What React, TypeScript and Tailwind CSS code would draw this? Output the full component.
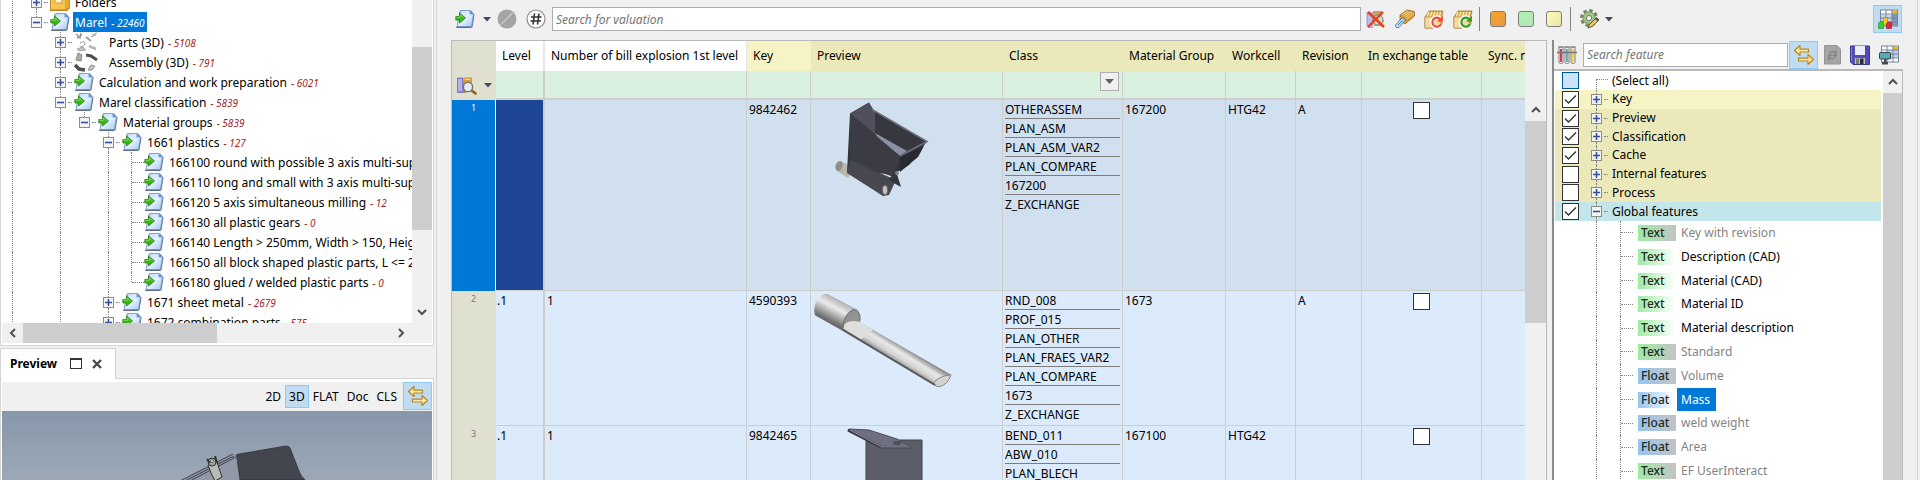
import React, { useState } from 'react';

// --- DATA LAYER ---
type TreeNode = {
  name: string;
  count?: string;
  // one entry per indentation level left of the node, true draws the guide line
  guides: boolean[];
  kind: 'folder' | 'doc' | 'parts' | 'assembly';
  open?: boolean;
  leaf?: boolean;
  last?: boolean;
  selected?: boolean;
};

const LEAF_GUIDES = [true, false, true, false, true];

const TREE: TreeNode[] = [
  { name: 'Folders', guides: [true], kind: 'folder' },
  { name: 'Marel', count: '22460', guides: [true], kind: 'doc', open: true, last: true, selected: true },
  { name: 'Parts (3D)', count: '5108', guides: [true, false], kind: 'parts' },
  { name: 'Assembly (3D)', count: '791', guides: [true, false], kind: 'assembly' },
  { name: 'Calculation and work preparation', count: '6021', guides: [true, false], kind: 'doc' },
  { name: 'Marel classification', count: '5839', guides: [true, false], kind: 'doc', open: true },
  { name: 'Material groups', count: '5839', guides: [true, false, true], kind: 'doc', open: true, last: true },
  { name: '1661 plastics', count: '127', guides: [true, false, true, false], kind: 'doc', open: true },
  { name: '166100 round with possible 3 axis multi-support', guides: LEAF_GUIDES, kind: 'doc', leaf: true },
  { name: '166110 long and small with 3 axis multi-support', guides: LEAF_GUIDES, kind: 'doc', leaf: true },
  { name: '166120 5 axis simultaneous milling', count: '12', guides: LEAF_GUIDES, kind: 'doc', leaf: true },
  { name: '166130 all plastic gears', count: '0', guides: LEAF_GUIDES, kind: 'doc', leaf: true },
  { name: '166140 Length > 250mm, Width > 150, Height', guides: LEAF_GUIDES, kind: 'doc', leaf: true },
  { name: '166150 all block shaped plastic parts, L <= 250', guides: LEAF_GUIDES, kind: 'doc', leaf: true },
  { name: '166180 glued / welded plastic parts', count: '0', guides: LEAF_GUIDES, kind: 'doc', leaf: true, last: true },
  { name: '1671 sheet metal', count: '2679', guides: [true, false, true, false], kind: 'doc' },
  { name: '1672 combination parts', count: '575', guides: [true, false, true, false], kind: 'doc' },
];

const COLUMNS = [
  { name: 'Level', width: 'w-[49px]', head: 'bg-white border-r-2 border-[#e6e6e6]', edge: 'border-r-2' },
  { name: 'Number of bill explosion 1st level', width: 'w-[202px]', head: 'bg-white border-r border-[#e6e6e6]', edge: 'border-r' },
  { name: 'Key', width: 'w-[64px]', head: 'bg-[#f6f4c5]', edge: 'border-r' },
  { name: 'Preview', width: 'w-[192px]', head: 'bg-[#ebe9ba]', edge: 'border-r' },
  { name: 'Class', width: 'w-[120px]', head: 'bg-[#ebe9ba]', edge: 'border-r' },
  { name: 'Material Group', width: 'w-[103px]', head: 'bg-[#ebe9ba]', edge: 'border-r' },
  { name: 'Workcell', width: 'w-[70px]', head: 'bg-[#ebe9ba]', edge: 'border-r' },
  { name: 'Revision', width: 'w-[66px]', head: 'bg-[#ebe9ba]', edge: 'border-r' },
  { name: 'In exchange table', width: 'w-[120px]', head: 'bg-[#ebe9ba]', edge: 'border-r' },
  { name: 'Sync. needed', width: '', head: 'bg-[#ebe9ba]', edge: '' },
];

const ROWS = [
  {
    level: '', explosion: '', key: '9842462', preview: 'hopper', group: '167200', workcell: 'HTG42', revision: 'A',
    classes: ['OTHERASSEM', 'PLAN_ASM', 'PLAN_ASM_VAR2', 'PLAN_COMPARE', '167200', 'Z_EXCHANGE'],
  },
  {
    level: '.1', explosion: '1', key: '4590393', preview: 'tube', group: '1673', workcell: '', revision: 'A',
    classes: ['RND_008', 'PROF_015', 'PLAN_OTHER', 'PLAN_FRAES_VAR2', 'PLAN_COMPARE', '1673', 'Z_EXCHANGE'],
  },
  {
    level: '.1', explosion: '1', key: '9842465', preview: 'sheet', group: '167100', workcell: 'HTG42', revision: '',
    classes: ['BEND_011', 'ABW_010', 'PLAN_BLECH', 'PLAN_COMPARE', '167100', 'Z_EXCHANGE'],
  },
];

const FEATURE_GROUPS = [
  { name: 'Key', checked: true, bg: 'bg-[#f6f4c5]' },
  { name: 'Preview', checked: true, bg: 'bg-[#ebe9ba]' },
  { name: 'Classification', checked: true, bg: 'bg-[#ebe9ba]' },
  { name: 'Cache', checked: true, bg: 'bg-[#ebe9ba]' },
  { name: 'Internal features', checked: false, bg: 'bg-[#ebe9ba]' },
  { name: 'Process', checked: false, bg: 'bg-[#ebe9ba]' },
  { name: 'Global features', checked: true, bg: 'bg-[#c2e6ea]', open: true },
];

const FEATURES = [
  { name: 'Key with revision', type: 'Text', enabled: false },
  { name: 'Description (CAD)', type: 'Text', enabled: true },
  { name: 'Material (CAD)', type: 'Text', enabled: true },
  { name: 'Material ID', type: 'Text', enabled: true },
  { name: 'Material description', type: 'Text', enabled: true },
  { name: 'Standard', type: 'Text', enabled: false },
  { name: 'Volume', type: 'Float', enabled: false },
  { name: 'Mass', type: 'Float', enabled: true },
  { name: 'weld weight', type: 'Float', enabled: false },
  { name: 'Area', type: 'Float', enabled: false },
  { name: 'EF UserInteract', type: 'Text', enabled: false },
];

const VIEW_MODES = ['2D', '3D', 'FLAT', 'Doc', 'CLS'];

// --- ICONS ---
const DocIcon = () => (
  <svg width="20" height="20" viewBox="0 0 20 20" className="shrink-0">
    <defs>
      <linearGradient id="docFill" x1="0" y1="0" x2="1" y2="1">
        <stop offset="0" stopColor="#b9d6fb" />
        <stop offset="0.5" stopColor="#e3f0ff" />
        <stop offset="1" stopColor="#a3c8f5" />
      </linearGradient>
    </defs>
    <path d="M4.5 3 L6 1.5 H16 L19.5 5.5 L17.5 18 L16 19 H1 L2 17 Z" fill="#5f6c85" />
    <path d="M5.5 1.5 H14.5 L18.5 5 L16.5 17.5 H2 Z" fill="url(#docFill)" stroke="#6d96d2" strokeWidth="0.8" />
    <path d="M14.5 1.2 L14.6 5.3 L18.6 5.4 Z" fill="#5f95e0" />
    <path d="M0.8 7.5 H4.5 V4 L10.5 9 L4.5 14 V11 H0.8 Z" fill="#3fb619" stroke="#26800d" strokeWidth="0.8" />
    <path d="M1.5 8.3 H5.3 V6 L8.5 8.8" fill="none" stroke="#8fe36a" strokeWidth="0.8" />
  </svg>
);

const FolderIcon = () => (
  <svg width="20" height="20" viewBox="0 0 20 20" className="shrink-0">
    <path d="M3 0 H18 L20 3 V16 L17 19 H0 Z" fill="#b87d1c" />
    <path d="M0.5 4 L3 1 H16 V18 H0.5 Z" fill="#f5c451" stroke="#c28a26" />
    <rect x="5" y="2" width="7" height="9" fill="#fff5d8" stroke="#cf9c3b" />
    <path d="M16 2 L19.5 4 V15 L16 18 Z" fill="#e9a92e" />
  </svg>
);

const PartsIcon = ({ dark }: { dark?: boolean }) => (
  <svg width="24" height="20" viewBox="0 0 24 20" className="shrink-0" fill="none" stroke={dark ? '#4d5054' : '#9c9c9c'}>
    {dark ? (
      <>
        <path d="M4 1 L8 3 L7 9 L2 8 Z" fill="#aab0a5" stroke="#878c83" />
        <path d="M12 3 L17 4 L23 8" strokeWidth="3" />
        <path d="M1 13 L5 17 L11 18" strokeWidth="3.5" />
        <path d="M14 18 L17 13 L21 14 L18 18 Z" fill="#c5c8c2" stroke="#8d8d8d" />
      </>
    ) : (
      <>
        <path d="M2 2 L6 6 L7 1 M3 6 L8 3" strokeWidth="1.5" />
        <path d="M12 5 L17 9" strokeWidth="2" />
        <path d="M18 3 L23 1 M17 5 L22 3" />
        <path d="M6 11 Q12 8 11 12 Q9 15 6 15" />
        <path d="M3 17 L9 15 L12 18 L5 19 Z" fill="#c0c0c0" stroke="#aaa" />
        <path d="M15 14 L22 17" strokeWidth="2.5" stroke="#b4b4b4" />
      </>
    )}
  </svg>
);

const NodeIcon = ({ kind }: { kind: TreeNode['kind'] }) => {
  if (kind === 'folder') return <FolderIcon />;
  if (kind === 'parts') return <PartsIcon />;
  if (kind === 'assembly') return <PartsIcon dark />;
  return <DocIcon />;
};

const SwapIcon = () => (
  <svg width="22" height="22" viewBox="0 0 22 22">
    <g fill="#ffe9a3" stroke="#b98523" strokeWidth="1.2" strokeLinejoin="round">
      <path d="M1.5 6.5 L7 1.5 V5.2 H15.5 V8 H7 V11.5 Z" />
      <path d="M20.5 15.5 L15 10.5 V14.2 H5.5 V17 H15 V20.5 Z" />
    </g>
  </svg>
);

const CabinetIcon = ({ arrow }: { arrow: string }) => (
  <svg width="20" height="20" viewBox="0 0 20 20">
    <path d="M1 8 L5 2 H19 L18 6 V17 L16 19 H1 Z" fill="#dfa94a" stroke="#a87423" strokeWidth="0.8" />
    <path d="M5 3 L3 8 M8 3 L6 8 M11 3 L9 8 M14 3 L12 8 M17 3 L15 8" stroke="#fff1bf" strokeWidth="1.2" />
    <rect x="1" y="8" width="15" height="11" fill="#f4dca0" stroke="#b0823a" strokeWidth="0.6" />
    <path d="M17 10.5 A5 5 0 1 0 17.5 15" fill="none" stroke="#fff" strokeWidth="4" />
    <path d="M16.5 10.5 A4.5 4.5 0 1 0 17 15" fill="none" stroke={arrow} strokeWidth="2.2" />
    <path d="M18.8 6.8 V12.6 H13 Z" fill={arrow} />
  </svg>
);

const DeleteIcon = () => (
  <svg width="20" height="20" viewBox="0 0 20 20">
    <path d="M0.5 3 H7 V19 H2 L0.5 16 Z" fill="#a3a1da" />
    <path d="M3 3 V17 M5 3 V18" stroke="#dddcf8" />
    <path d="M7 2 H16 V7 L18 12 L15 17 H8 Z" fill="#c9a265" />
    <circle cx="12" cy="11" r="5" fill="#d8dbd6" stroke="#85857b" />
    <path d="M2 3 L18 18 M17 3 L2 18" stroke="#ee3c14" strokeWidth="2.4" />
  </svg>
);

const LabelIcon = () => (
  <svg width="20" height="20" viewBox="0 0 20 20">
    <path d="M5 6 L12 1 L19.5 2.5 V7 L10 15 L5 12 Z" fill="#d69a34" stroke="#8a6120" strokeWidth="0.7" />
    <path d="M7 6 L13 2 M9 7 L15 2.5 M11 8 L17 3 M12 10 L19 4" stroke="#f8dc91" />
    <path d="M0.5 16 L7 9 L10.5 10.5 L4 18.5 L1 18.5 Z" fill="#bfdcf4" stroke="#477eb0" strokeWidth="0.9" />
    <path d="M3 16 L7.5 11.5" stroke="#477eb0" />
  </svg>
);

const GearIcon = () => (
  <svg width="21" height="20" viewBox="0 0 21 20">
    <circle cx="10" cy="9" r="7.5" fill="none" stroke="#6f8a58" strokeWidth="3" strokeDasharray="3.4 2.49" />
    <circle cx="10" cy="9" r="6.2" fill="#a3c18c" stroke="#6b8655" strokeWidth="0.8" />
    <circle cx="10" cy="9" r="2.6" fill="#f0f0f0" stroke="#6b8655" />
    <path d="M9 19 L10.5 15.5 L17.5 8.5 L20 11 L13 17.5 Z" fill="#f3c868" stroke="#56502f" strokeWidth="0.9" />
    <path d="M16 10 L18.5 12.5 L20 11 L17.5 8.5 Z" fill="#555" />
  </svg>
);

const LookupIcon = () => (
  <svg width="20" height="18" viewBox="0 0 20 18">
    <path d="M0.5 1 H6 V15.5 H0.5 Z" fill="#8c87d6" stroke="#6762b4" strokeWidth="0.7" />
    <path d="M2 2 V14 M4 2 V14" stroke="#dcdafc" />
    <path d="M6 2 L8 0.5 H15 V6 H6 Z" fill="#d79b3c" />
    <path d="M6 6 H9 V16 H6 Z" fill="#b58538" />
    <path d="M8 2.5 H13" stroke="#fbe3ae" />
    <path d="M14 13 L18.5 16.5" stroke="#8a6222" strokeWidth="2.6" strokeLinecap="round" />
    <circle cx="11" cy="10" r="4.6" fill="#e3eef2" stroke="#7b7464" strokeWidth="1.4" />
  </svg>
);

const TableChartIcon = () => (
  <svg width="20" height="20" viewBox="0 0 20 20">
    <rect x="2.5" y="1" width="17" height="16" fill="#fff" stroke="#7583a1" />
    <path d="M3 6 H14 V12 H3 Z" fill="#c9d2e6" />
    <path d="M14 1.5 H19 V4.5 H14 Z" fill="#e8b90f" />
    <path d="M14 5 H19 V17 H14 Z" fill="#8496bb" />
    <path d="M3 5 H19 M3 9 H19 M3 13 H19 M8 1 V17 M14 1 V17" stroke="#7583a1" />
    <path d="M0.5 14 L2 12.5 H5.5 V19.5 H0.5 Z" fill="#36cf33" stroke="#208d20" strokeWidth="0.6" />
    <path d="M5.5 10 L7 8.5 H9.5 V16 H5.5 Z" fill="#f4c920" stroke="#9d7f13" strokeWidth="0.6" />
    <path d="M8.5 14.5 L10 13 H13.5 V19.5 H8.5 Z" fill="#e42544" stroke="#8e1529" strokeWidth="0.6" />
  </svg>
);

const TubesIcon = () => (
  <svg width="20" height="18" viewBox="0 0 20 18">
    {[{ x: 2, c: '#e2344c' }, { x: 8, c: '#7fa9c0' }, { x: 14, c: '#f0dc22' }].map(t => (
      <g key={t.x}>
        <rect x={t.x} y="1" width="4" height="16.5" rx="1.5" fill="#f2f2f2" stroke="#7b7b7b" />
        <rect x={t.x + 1} y="3" width="2" height="13" fill={t.c} />
        <path d={`M${t.x - 1} 1 H${t.x + 5}`} stroke="#777" />
      </g>
    ))}
    <path d="M0 6.5 H20" stroke="#777" strokeWidth="1.5" />
  </svg>
);

const RefreshPageIcon = () => (
  <svg width="17" height="20" viewBox="0 0 17 20">
    <path d="M0.5 0.5 H13 L16.5 4 V19 H0.5 Z" fill="#a6a6a6" stroke="#939393" />
    <path d="M5 9 Q8 5 11 8 L12 6.5 V10.5 H8.5 M12 11 Q9 15.5 6 13 L4.5 14.5 V10.5 H8" fill="none" stroke="#828282" strokeWidth="1.3" />
  </svg>
);

const SaveIcon = () => (
  <svg width="20" height="20" viewBox="0 0 20 20">
    <path d="M0.5 1 H19.5 V19.5 H3 L0.5 17 Z" fill="#514fb5" stroke="#38378a" />
    <path d="M5 1 H15 V10 H5 Z" fill="#eceef8" />
    <path d="M1.5 2 V16" stroke="#8583de" />
    <path d="M5 13 H15 V19 H5 Z" fill="#bfc2d1" />
    <path d="M10 13.5 H13.5 V19 H10 Z" fill="#2c2c2c" />
    <path d="M6 13.5 H9 V19 H6 Z" fill="#777" />
  </svg>
);

const TableCameraIcon = () => (
  <svg width="20" height="20" viewBox="0 0 20 20">
    <rect x="2.5" y="1" width="17" height="16" fill="#fff" stroke="#7583a1" />
    <path d="M14 1.5 H19 V5 H14 Z" fill="#e8b90f" />
    <path d="M8 5 H19 V13 H8 Z" fill="#c3cfe4" />
    <path d="M3 5 H19 M3 9 H19 M3 13 H19 M8 1 V17 M14 1 V17" stroke="#7583a1" />
    <rect x="0.5" y="7.5" width="11" height="6.5" rx="1" fill="#59a9bb" stroke="#35454b" />
    <path d="M3 17 H9 V19.5 H3 Z M5 14 H7.5 V17 H5 Z" fill="#4a4a4a" />
  </svg>
);

const Caret = () => (
  <svg width="8" height="5" viewBox="0 0 8 5">
    <path d="M0 0 H8 L4 4.5 Z" fill="#3c4b5f" />
  </svg>
);

const Chevron = ({ d }: { d: string }) => (
  <svg width="10" height="10" viewBox="0 0 10 10" fill="none" stroke="#505050" strokeWidth="2">
    <path d={d} />
  </svg>
);

// --- PART THUMBNAILS ---
const Hopper = () => (
  <svg width="190" height="110" viewBox="1 0 190 110" className="block">
    <path d="M30 61 L45 68 L38 78 L27 71 Q24 64 30 61 Z" fill="#b9b6ae" />
    <ellipse cx="29" cy="66" rx="3.5" ry="5" transform="rotate(20 29 66)" fill="#8f8d87" />
    <path d="M40 13.5 L59 2.5 L61.5 9.5 L117 41.5 L99 65 L84 74 L37 72 Z" fill="#33343c" />
    <path d="M40 13.5 L59 2.5 L65 12 V34 Z" fill="#50505d" />
    <path d="M65 11 L115 41.5 L97 51 L65 33 Z" fill="#36373f" />
    <path d="M65 33 L97 51 L90 56 L68 39 Z" fill="#8b90a3" />
    <path d="M40 13.5 L90 56 L84 77 L40 62 Z" fill="#3a3b44" />
    <path d="M62 9.5 L117 41.5 L90 56" fill="none" stroke="#6e6f7b" strokeWidth="1.5" />
    <path d="M90 57 L114 46 L108 57 L90 72 Z" fill="#292a31" />
    <path d="M40 60 L86 80 L79 95 L73 96 L37 73 Z" fill="#474750" />
    <path d="M79 79 L86 71 L91 87 L82 82 Z" fill="#33343c" />
    <ellipse cx="75" cy="90" rx="2.5" ry="4.5" fill="#c4c2bb" stroke="#6d6d6d" />
    <circle cx="87" cy="73" r="2" fill="#84868f" />
  </svg>
);

const Tube = () => (
  <svg width="190" height="110" viewBox="0 0 190 110" className="block">
    <defs>
      <linearGradient id="tubeBig" gradientUnits="userSpaceOnUse" x1="31" y1="10" x2="16" y2="36">
        <stop offset="0" stopColor="#a8a8a8" />
        <stop offset="0.35" stopColor="#ececec" />
        <stop offset="0.8" stopColor="#777" />
        <stop offset="1" stopColor="#555" />
      </linearGradient>
      <linearGradient id="tubeSlim" gradientUnits="userSpaceOnUse" x1="94" y1="58" x2="80" y2="79">
        <stop offset="0" stopColor="#6b6b6b" />
        <stop offset="0.35" stopColor="#e8e8e8" />
        <stop offset="0.6" stopColor="#d4d4d4" />
        <stop offset="1" stopColor="#4b4b4b" />
      </linearGradient>
    </defs>
    <g transform="scale(1 0.93)">
      <path d="M48 33 L140 90 Q138 100 128 103 L32 42 Z" fill="url(#tubeSlim)" />
      <path d="M140 90 Q126 92 123 99 Q124 103 128 103 Q137 101 140 90 Z" fill="#d3d3d3" stroke="#858585" />
      <path d="M16 3 L46 20 Q51 26 48 34 L32 43 L4 26 Q1 13 10 5 Q13 3 16 3 Z" fill="url(#tubeBig)" />
      <path d="M32 42 Q31 26 42 20 Q50 20 49 33 Z" fill="#929292" />
      <path d="M32 40 Q34 30 48 33 L62 42 L50 52 Z" fill="#dedede" />
      <path d="M32 40 Q32 26 42 20 Q50 20 49 32" fill="none" stroke="#6b6b6b" />
      <path d="M32 42 L124 101" stroke="#555" strokeWidth="2" />
    </g>
  </svg>
);

const Sheet = () => (
  <svg width="190" height="110" viewBox="0 0 190 110" className="block">
    <path d="M55 14 H111 V110 H55 Z" fill="#5b5e68" stroke="#41434b" />
    <path d="M38 3 L58 4 L86 13 L102 22 H70 L37 5 Z" fill="#6f7180" stroke="#4a4c57" />
    <path d="M37 4 L70 21" stroke="#3c3e47" strokeWidth="3" />
    <path d="M39 4 L71 21" stroke="#8f919e" />
    <ellipse cx="86" cy="17" rx="4" ry="2" fill="#4c4e58" />
  </svg>
);

const THUMBNAILS: Record<string, React.ReactNode> = { hopper: <Hopper />, tube: <Tube />, sheet: <Sheet /> };

// --- SHARED PIECES ---
const Expander = ({ open, label }: { open?: boolean; label: string }) => (
  <button aria-label={label} className="grid size-[11px] shrink-0 place-items-center border border-[#8c8c8c] bg-[#f4f4f4]">
    <svg width="7" height="7" viewBox="0 0 7 7" className="block">
      <path d={open ? 'M0 3.5 H7' : 'M0 3.5 H7 M3.5 0 V7'} stroke="#32509b" strokeWidth="1.6" />
    </svg>
  </button>
);

const CheckBox = ({ id, defaultChecked, label, partial }: { id?: string; defaultChecked?: boolean; label?: string; partial?: boolean }) => (
  <span className="grid shrink-0 place-items-center">
    <input
      type="checkbox"
      id={id}
      aria-label={label}
      defaultChecked={defaultChecked}
      className={`peer col-start-1 row-start-1 size-[17px] appearance-none border ${partial ? 'border-[#00559b] bg-[#cce4f7]' : 'border-[#333] bg-white'}`}
    />
    <svg width="13" height="13" viewBox="0 0 13 13" className="pointer-events-none invisible col-start-1 row-start-1 peer-checked:visible" fill="none" stroke="#333" strokeWidth="1.4">
      <path d="M1 6.5 L4.5 10 L12 2.5" />
    </svg>
  </span>
);

const TreeRow = ({ node }: { node: TreeNode }) => (
  <li className="flex h-5 shrink-0 items-center whitespace-nowrap">
    {node.guides.map((on, i) => (
      <span key={i} className={`h-full shrink-0 ${i === 0 ? 'w-[22px] pl-2.5' : 'w-6 pl-3'}`}>
        <span className={`block h-full ${on ? 'border-l border-dotted border-[#808080]' : ''}`} />
      </span>
    ))}
    {node.leaf ? (
      <span className="flex h-full w-6 shrink-0 items-center pl-[11px]">
        <span className={`self-start border-l border-dotted border-[#808080] ${node.last ? 'h-1/2' : 'h-full'}`} />
        <span className="w-3 border-t border-dotted border-[#808080]" />
      </span>
    ) : (
      <span className="flex h-full w-[26px] shrink-0 items-center pl-[7px]">
        <span className="flex h-full flex-col items-center">
          <span className="w-px flex-1 border-l border-dotted border-[#808080]" />
          <Expander open={node.open} label={`Toggle ${node.name}`} />
          <span className={`w-px flex-1 ${node.last ? '' : 'border-l border-dotted border-[#808080]'}`} />
        </span>
        <span className="mx-0.5 flex-1 border-t border-dotted border-[#808080]" />
      </span>
    )}
    <NodeIcon kind={node.kind} />
    <a
      href="#"
      className={`flex h-5 items-center gap-1 pt-px pr-0.5 pl-0.5 ${node.kind === 'parts' || node.kind === 'assembly' ? 'ml-[9px]' : 'ml-[3px]'} ${node.selected ? 'bg-[#0078d7] text-white' : ''}`}
    >
      {node.name}
      {node.count && (
        <span className={`text-[10px] italic ${node.selected ? 'text-white' : 'text-[#a51f24]'}`}>- {node.count}</span>
      )}
    </a>
  </li>
);

const ClassificationTree = () => (
  <div className="flex h-[346px] shrink-0 flex-col border-x border-b border-[#d4d4d4] bg-white px-px pb-0.5">
    <div className="flex min-h-0 flex-1">
      <ul className="-mt-2 flex min-w-0 flex-1 flex-col overflow-hidden">
        {TREE.map(node => <TreeRow key={node.name} node={node} />)}
      </ul>
      <div className="flex w-5 flex-col items-center bg-[#f0f0f0] pt-[47px]">
        <div className="h-[183px] w-full bg-[#cdcdcd]" />
        <div className="mt-auto pb-1.5">
          <Chevron d="M1 3 L5 7 L9 3" />
        </div>
      </div>
    </div>
    <div className="flex h-5 items-center bg-[#f0f0f0]">
      <div className="grid w-[21px] place-items-center"><Chevron d="M7 1 L3 5 L7 9" /></div>
      <div className="h-full w-[194px] bg-[#cdcdcd]" />
      <div className="mr-[26px] ml-auto"><Chevron d="M3 1 L7 5 L3 9" /></div>
    </div>
  </div>
);

const PreviewPane = () => {
  const [mode, setMode] = useState('3D');
  return (
    <section className="mt-0.5 flex min-h-0 flex-1 flex-col">
      <div className="flex h-[31px]">
        <div className="-mb-px flex w-[116px] items-center border border-b-0 border-[#d4d4d4] bg-white pb-0.5 pl-[9px]">
          <h2 className="w-[60px] font-bold">Preview</h2>
          <button aria-label="Maximize" className="h-[11px] w-3 border border-t-2 border-[#333] bg-white" />
          <button aria-label="Close" className="ml-2.5">
            <svg width="10" height="10" viewBox="0 0 10 10">
              <path d="M1 1 L9 9 M9 1 L1 9" stroke="#484848" strokeWidth="2.4" />
            </svg>
          </button>
        </div>
        <div className="flex-1 border-b border-[#d4d4d4]" />
      </div>
      <div className="flex min-h-0 flex-1 flex-col border-x border-[#d4d4d4] bg-white px-px pt-[3px]">
        <div className="flex h-[29px] items-center justify-end bg-[#f0f0f0]">
          {VIEW_MODES.map(m => (
            <button
              key={m}
              onClick={() => setMode(m)}
              className={`h-[23px] border px-[3px] ${m === mode ? 'border-[#90c8f6] bg-[#c0dcf3]' : 'border-transparent'}`}
            >
              {m}
            </button>
          ))}
          <button aria-label="Swap view" className="ml-0.5 grid h-7 w-[29px] place-items-center self-start border border-[#90c8f6] bg-[#c0dcf3]">
            <SwapIcon />
          </button>
        </div>
        <div className="min-h-0 flex-1 overflow-hidden bg-linear-to-b from-[#8797aa] to-[#9ca8b6]">
          <svg width="430" height="69" viewBox="0 0 430 69" className="block">
            <path d="M231 43 L182 69 H240 L234.5 43 Z" fill="#9298a8" />
            <path d="M178 70 L231 43 M181 71 L232 45 M184 72 L234 46" stroke="#3e4046" strokeWidth="1" />
            <path d="M234.5 43.5 L284 35 Q287 35 288 37 L297 60 Q298 64 303 69 H238 Z" fill="#44464f" stroke="#2e2f35" strokeWidth="0.8" />
            <path d="M206 54 L215 51 L220 66 L213 70 L209 62 Z" fill="#b9b9b6" stroke="#333" />
            <circle cx="210" cy="51" r="4" fill="#a5a5a2" stroke="#333" />
            <path d="M205 48 L208 52 M213 45 L215 52" stroke="#333" strokeWidth="2" />
            <circle cx="210" cy="50" r="1.5" fill="#ddd" stroke="#333" strokeWidth="0.6" />
          </svg>
        </div>
      </div>
    </section>
  );
};

const Toolbar = () => (
  <header className="flex h-10 shrink-0 items-center pr-[15px] pb-0.5 pl-4">
    <button aria-label="Open document"><DocIcon /></button>
    <button aria-label="Document options" className="ml-2"><Caret /></button>
    <button aria-label="Disabled filter" className="ml-1.5">
      <svg width="20" height="20" viewBox="0 0 20 20">
        <circle cx="10" cy="10" r="9.5" fill="#a4a4a4" />
        <path d="M3.5 16 L16 3.5" stroke="#c6c6c6" strokeWidth="1.5" />
      </svg>
    </button>
    <button aria-label="Number filter" className="ml-[9px]">
      <svg width="20" height="20" viewBox="0 0 20 20">
        <circle cx="10" cy="10" r="9" fill="#fbfbfb" stroke="#8f8f8f" strokeWidth="1.2" />
        <path d="M8.5 4.5 L7 15.5 M13 4.5 L11.5 15.5 M5 8 H15.5 M4.5 12 H15" stroke="#333" strokeWidth="1.6" />
      </svg>
    </button>
    <input
      type="text"
      aria-label="Search for valuation"
      placeholder="Search for valuation"
      className="ml-1.5 h-6 min-w-0 flex-1 border border-[#abadb3] bg-white px-[3px] italic placeholder:text-[#757575] placeholder:italic"
    />
    <div className="ml-[5px] flex items-center gap-[9px]">
      <button aria-label="Clear search"><DeleteIcon /></button>
      <button aria-label="Label"><LabelIcon /></button>
      <button aria-label="Reset cabinet"><CabinetIcon arrow="#ef4b3c" /></button>
      <button aria-label="Reload cabinet"><CabinetIcon arrow="#2d9a27" /></button>
    </div>
    <div className="ml-1.5 h-6 w-px bg-[#848484]" />
    <div className="mr-2 ml-2.5 flex gap-3">
      <button aria-label="Orange" className="size-4 rounded-[3px] border border-[#7d7d7d] bg-linear-to-br from-[#ffa216] to-[#df9c45]" />
      <button aria-label="Green" className="size-4 rounded-[3px] border border-[#7d7d7d] bg-linear-to-br from-[#aaf7ae] to-[#b5e3b8]" />
      <button aria-label="Yellow" className="size-4 rounded-[3px] border border-[#7d7d7d] bg-linear-to-br from-[#fdfbb0] to-[#e8e6b0]" />
    </div>
    <div className="h-6 w-px bg-[#848484]" />
    <div className="flex w-[331px] items-center pl-2">
      <button aria-label="Settings"><GearIcon /></button>
      <button aria-label="Settings options" className="ml-[5px]"><Caret /></button>
      <button aria-label="Feature table" className="ml-auto grid h-7 w-[29px] place-items-center border border-[#90c8f6] bg-[#c0dcf3]">
        <TableChartIcon />
      </button>
    </div>
  </header>
);

const BomTable = () => (
  <div className="flex min-w-0 flex-1 overflow-hidden border-x border-t border-[#b9b9b9]">
    <div className="min-w-0 flex-1 overflow-hidden">
      <table className="w-full table-fixed border-separate border-spacing-0 text-left">
        <thead>
          <tr className="h-[30px]">
            <th className="w-11 bg-[#dfe0cf]" />
            {COLUMNS.map(col => (
              <th key={col.name} className={`overflow-hidden pl-1.5 font-normal whitespace-nowrap ${col.width} ${col.head}`}>
                {col.name}
              </th>
            ))}
          </tr>
          <tr className="h-[29px]">
            <th className="bg-[#dfe0cf] p-0 pl-[5px]">
              <div className="flex items-center gap-[7px]">
                <button aria-label="Find in table"><LookupIcon /></button>
                <button aria-label="Find options"><Caret /></button>
              </div>
            </th>
            {COLUMNS.map(col => (
              <td key={col.name} className={`border-b-2 border-[#cdcdcd] bg-[#dbf1e0] p-0 align-top ${col.edge}`}>
                {col.name === 'Class' && (
                  <button aria-label="Filter by class" className="mt-px mr-[3px] ml-auto grid size-[19px] place-items-center border border-[#adadad] bg-[#f0f0f0]">
                    <svg width="9" height="5" viewBox="0 0 9 5"><path d="M0 0 H9 L4.5 5 Z" fill="#606060" /></svg>
                  </button>
                )}
              </td>
            ))}
          </tr>
        </thead>
        <tbody>
          {ROWS.map((row, i) => {
            const active = i === 0;
            const cell = `border-b border-r border-[#cdcdcd] p-0 pl-0.5 align-top leading-[19px] ${active ? 'bg-[#d1e0ef]' : 'bg-[#dcebfb]'}`;
            return (
              <tr key={row.key} className={active ? 'h-[191px]' : 'h-[135px]'}>
                <th className={`border-r p-0 pt-0.5 text-center align-top text-[9px] leading-3 font-normal ${active ? 'border-white bg-[#0078d7] text-white' : 'border-[#dfe0cf] bg-[#dfe0cf] text-[#7a7a7a]'}`}>
                  {i + 1}
                </th>
                <td className={`border-r-2 border-b border-[#cdcdcd] p-0 align-top leading-[19px] ${active ? 'bg-[#1f4695]' : 'bg-[#dcebfb] pl-px'}`}>{row.level}</td>
                <td className={cell}>{row.explosion}</td>
                <td className={cell}>{row.key}</td>
                <td className={`border-r border-b border-[#cdcdcd] p-0 align-top ${active ? 'bg-[#d1e0ef]' : 'bg-[#dcebfb]'}`}>{THUMBNAILS[row.preview]}</td>
                <td className={`${cell} pr-0.5`}>
                  <ul className="divide-y divide-[#7d7d7d]">
                    {row.classes.map(c => <li key={c} className="h-[19px] leading-[19px]">{c}</li>)}
                  </ul>
                </td>
                <td className={cell}>{row.group}</td>
                <td className={cell}>{row.workcell}</td>
                <td className={cell}>{row.revision}</td>
                <td className={`${cell} pt-0.5 pr-0.5`}>
                  <div className="flex justify-center"><CheckBox label={`${row.key} in exchange table`} /></div>
                </td>
                <td className={`border-b border-[#cdcdcd] ${active ? 'bg-[#d1e0ef]' : 'bg-[#dcebfb]'}`} />
              </tr>
            );
          })}
        </tbody>
      </table>
    </div>
    <div className="flex w-[21px] shrink-0 flex-col items-center bg-[#f0f0f0] pt-16">
      <Chevron d="M1 7 L5 3 L9 7" />
      <div className="mt-1.5 h-[202px] w-full bg-[#cdcdcd]" />
    </div>
  </div>
);

const TYPE_STYLES: Record<string, string> = {
  'Text-on': 'bg-linear-to-r from-[#9deba4] to-white',
  'Text-off': 'bg-linear-to-r from-[#9deba4] to-[#c3c3c3]',
  'Float-on': 'bg-linear-to-r from-[#93c5f2] to-white',
  'Float-off': 'bg-linear-to-r from-[#93c5f2] to-[#c3c3c3]',
};

const FeaturePanel = () => {
  const [selected, setSelected] = useState('Mass');
  return (
    <aside className="ml-[5px] flex w-[351px] shrink-0 flex-col border-l-2 border-[#8a8a8a]">
      <div className="flex h-[29px] shrink-0 items-center pl-[3px]">
        <button aria-label="Feature sets"><TubesIcon /></button>
        <input
          type="text"
          aria-label="Search feature"
          placeholder="Search feature"
          className="ml-1.5 h-6 min-w-0 flex-1 border border-[#abadb3] bg-white px-[3px] italic placeholder:text-[#757575] placeholder:italic"
        />
        <button aria-label="Swap features" className="ml-px grid h-7 w-[29px] place-items-center border border-[#90c8f6] bg-[#c0dcf3]">
          <SwapIcon />
        </button>
        <div className="flex items-center gap-[9px] pr-1 pl-1.5">
          <button aria-label="Reload"><RefreshPageIcon /></button>
          <button aria-label="Save"><SaveIcon /></button>
          <button aria-label="Table view"><TableCameraIcon /></button>
        </div>
      </div>
      <div className="flex min-h-0 flex-1 border-t-2 border-r border-[#b9b9b9] bg-white pl-px">
        <div className="min-w-0 flex-1 overflow-hidden pr-0.5">
          <div className="flex h-[19px] items-center pl-[7px]">
            <CheckBox id="feature-all" partial />
            <span className="mt-2 ml-[17px] h-3 w-3 border-t border-l border-dotted border-[#808080]" />
            <label htmlFor="feature-all" className="ml-1">(Select all)</label>
          </div>
          <div className="grid h-[131px] auto-rows-fr">
            {FEATURE_GROUPS.map(g => (
              <div key={g.name} className={`flex items-center pl-[7px] ${g.bg}`}>
                <CheckBox id={`feature-${g.name}`} defaultChecked={g.checked} />
                <span className="ml-3 flex h-full flex-col items-center">
                  <span className="flex-1 border-l border-dotted border-[#808080]" />
                  <Expander open={g.open} label={`Toggle ${g.name}`} />
                  <span className="flex-1 border-l border-dotted border-[#808080]" />
                </span>
                <span className="ml-0.5 w-1 border-t border-dotted border-[#808080]" />
                <label htmlFor={`feature-${g.name}`} className="ml-1">{g.name}</label>
              </div>
            ))}
          </div>
          <ul className="grid h-[262px] auto-rows-fr">
            {FEATURES.map(f => (
              <li key={f.name} className="flex items-center pl-[41px]">
                <span className="h-full w-6 border-l border-dotted border-[#808080]" />
                <span className="h-full border-l border-dotted border-[#808080]" />
                <span className="w-3 border-t border-dotted border-[#808080]" />
                <span className={`ml-[5px] h-4 w-[38px] pl-[3px] leading-4 font-medium text-[#1d2b22] ${TYPE_STYLES[`${f.type}-${f.enabled ? 'on' : 'off'}`]}`}>
                  {f.type}
                </span>
                <button
                  onClick={() => setSelected(f.name)}
                  className={`ml-px h-[23px] pr-1.5 pl-1 ${selected === f.name ? 'bg-[#0078d7] text-white' : f.enabled ? '' : 'text-[#838383]'}`}
                >
                  {f.name}
                </button>
              </li>
            ))}
          </ul>
        </div>
        <div className="flex w-[19px] shrink-0 flex-col items-center bg-[#f0f0f0] pt-1.5">
          <Chevron d="M1 7 L5 3 L9 7" />
          <div className="mt-1.5 w-full flex-1 bg-[#cdcdcd]" />
        </div>
      </div>
    </aside>
  );
};

const App: React.FC = () => (
  <div className="flex h-screen overflow-hidden bg-[#f0f0f0] font-['Noto_Sans',sans-serif] text-[12px] leading-4 text-black">
    <div className="flex w-[434px] shrink-0 flex-col">
      <ClassificationTree />
      <PreviewPane />
    </div>
    <div className="mx-0.5 w-px shrink-0 bg-[#d4d4d4]" />
    <main className="flex min-w-0 flex-1 flex-col">
      <Toolbar />
      <div className="flex min-h-0 flex-1 pr-[14px] pl-3">
        <BomTable />
        <FeaturePanel />
      </div>
    </main>
    <div className="mr-0.5 w-px shrink-0 bg-[#d4d4d4]" />
  </div>
);

export default App;
